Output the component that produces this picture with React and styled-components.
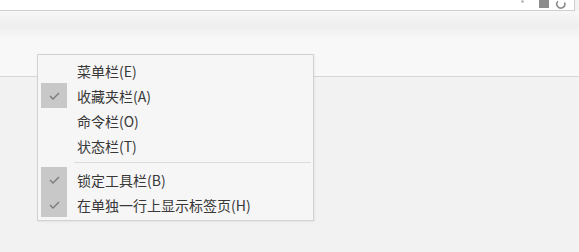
import React from 'react'
import styled, { createGlobalStyle } from 'styled-components'

const GlobalStyle = createGlobalStyle`
  html, body {
    margin: 0;
    padding: 0;
    background: #f2f2f2;
  }
  body {
    font-family: "Noto Sans CJK SC", "Noto Sans", "Liberation Sans", sans-serif;
  }
`;

const Page = styled.div`
  position: relative;
  width: 579px;
  height: 252px;
  display: flex;
  flex-direction: column;
  background: #f2f2f2;
  overflow: hidden;
`;

const AddressBar = styled.div`
  width: 575px;
  height: 11px;
  background: #ffffff;
  border-bottom: 1px solid #cfcfcf;
  border-right: 1px solid #cfcfcf;
  display: flex;
  justify-content: flex-end;
  align-items: flex-start;
  padding-right: 8px;
  box-sizing: border-box;
`;

const TabStrip = styled.div`
  height: 26px;
  background: linear-gradient(#f7f7f7, #eeeeee 60%, #f6f6f6);
`;

const CommandBar = styled.div`
  height: 39px;
  background: #f8f8f8;
  border-bottom: 1px solid #d6d6d6;
`;

const Content = styled.div`
  flex: 1;
  background: #f2f2f2;
`;

const Menu = styled.ul`
  position: absolute;
  left: 37px;
  top: 54px;
  width: 277px;
  box-sizing: border-box;
  margin: 0;
  padding: 3px 2px 3px 2px;
  list-style: none;
  background: #f6f6f6;
  border: 1px solid #d2d2d2;
  box-shadow: 1px 1px 2px rgba(0, 0, 0, 0.06);
`;

const Item = styled.li`
  height: 25px;
  display: flex;
  align-items: center;
  font-size: 14px;
  color: #383838;
  white-space: nowrap;
`;

const CheckCell = styled.span`
  width: 26px;
  height: 25px;
  margin-left: 1px;
  margin-right: 10px;
  display: flex;
  align-items: center;
  justify-content: center;
  background: ${p => (p.$checked ? '#c8c8c8' : 'transparent')};
`;

const Separator = styled.li`
  height: 9px;
  display: flex;
  align-items: center;
  padding-left: 34px;
  &::after {
    content: '';
    flex: 1;
    height: 1px;
    background: #dcdcdc;
  }
`;

const Check = () => (
  <svg width="11" height="8" viewBox="0 0 11 8">
    <path d="M1 4 L4 7 L10 1" fill="none" stroke="#7a7a7a" strokeWidth="1.4" />
  </svg>
);

const TopIcons = () => (
  <svg width="50" height="10" viewBox="0 0 50 10">
    <circle cx="6.5" cy="1.5" r="1.3" fill="#b0b0b0" />
    <rect x="23" y="0" width="10" height="8" fill="#8c8c8c" />
    <path d="M42 1.2 A4 4 0 1 0 48.5 2.5" fill="none" stroke="#8c8c8c" strokeWidth="1.6" />
  </svg>
);

const items = [
  { label: '菜单栏(E)', checked: false },
  { label: '收藏夹栏(A)', checked: true },
  { label: '命令栏(O)', checked: false },
  { label: '状态栏(T)', checked: false },
  { sep: true },
  { label: '锁定工具栏(B)', checked: true },
  { label: '在单独一行上显示标签页(H)', checked: true },
];

export default function App() {
  return (
    <>
      <GlobalStyle />
      <Page>
        <AddressBar>
          <TopIcons />
        </AddressBar>
        <TabStrip />
        <CommandBar />
        <Content />
        <Menu>
          {items.map((it, i) =>
            it.sep ? (
              <Separator key={i} />
            ) : (
              <Item key={i}>
                <CheckCell $checked={it.checked}>{it.checked && <Check />}</CheckCell>
                {it.label}
              </Item>
            )
          )}
        </Menu>
      </Page>
    </>
  );
}
